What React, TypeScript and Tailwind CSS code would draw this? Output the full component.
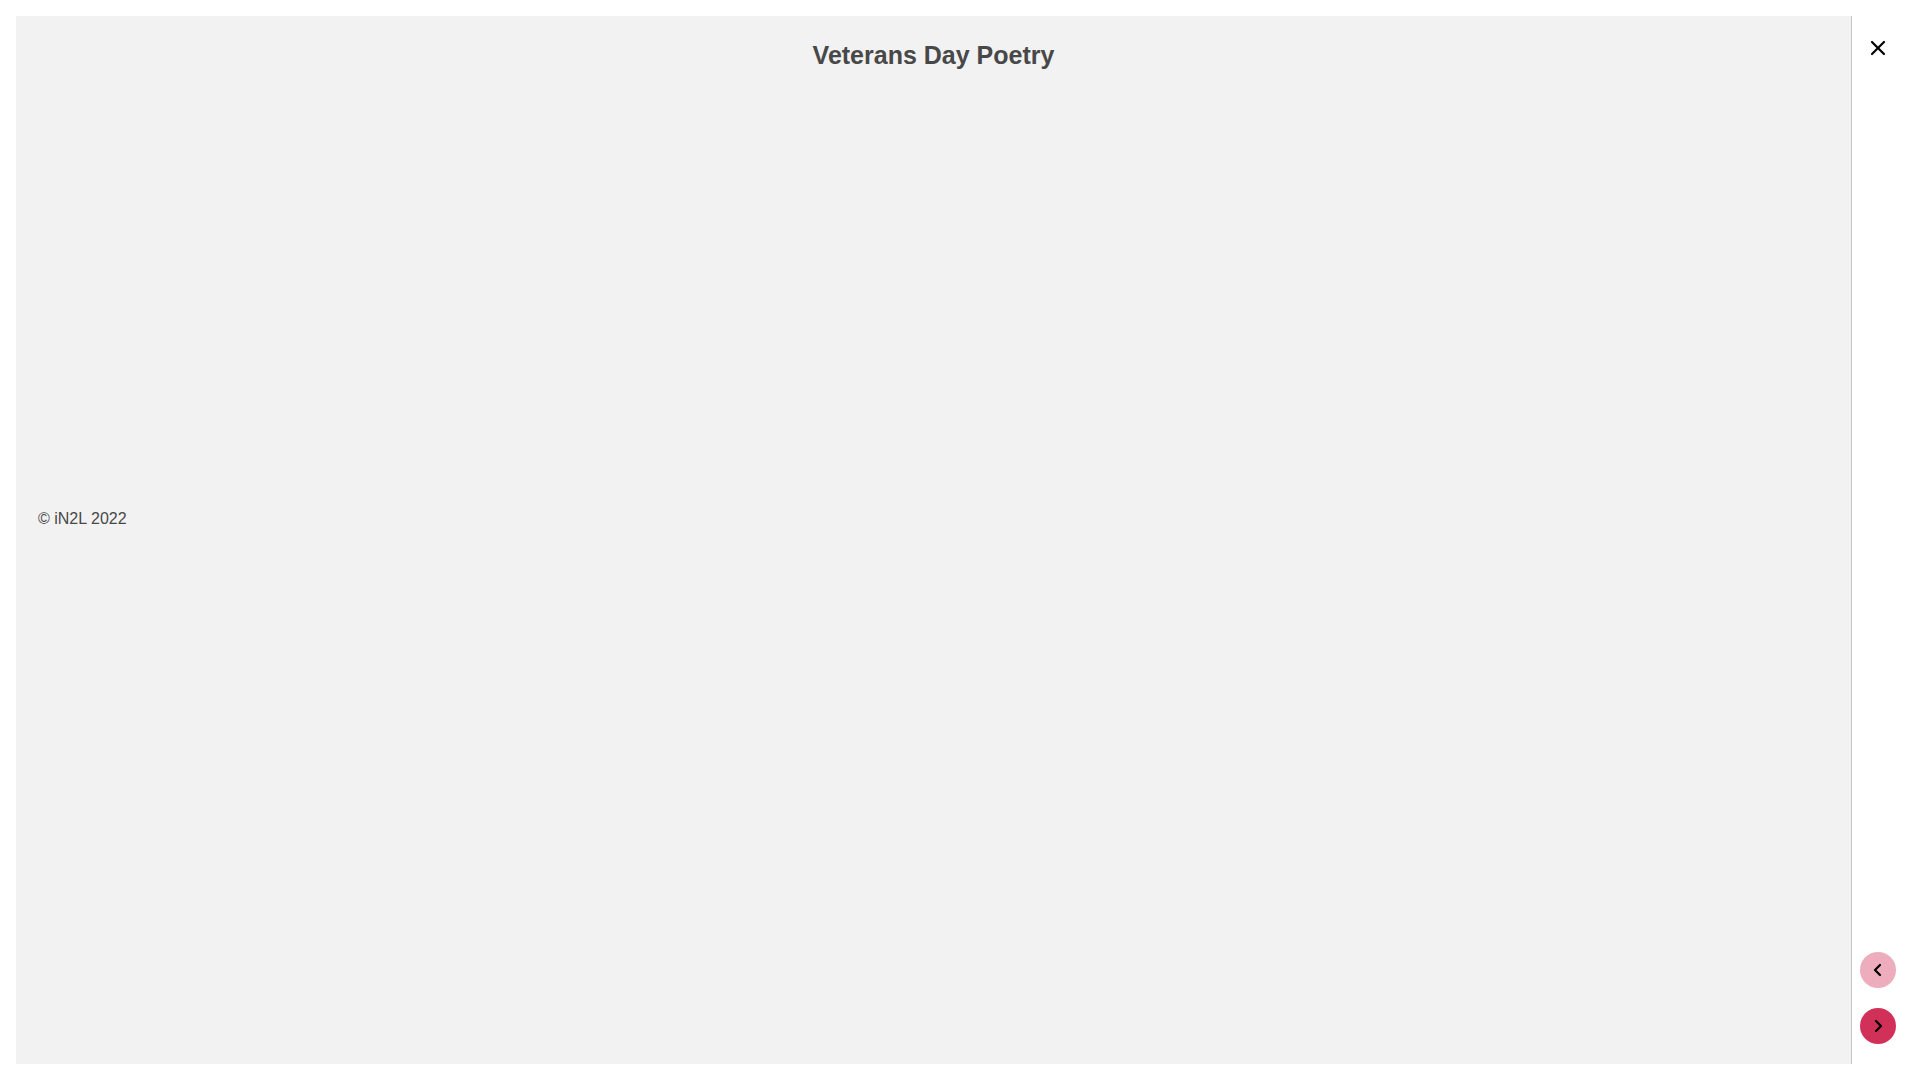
import { X } from 'lucide-react';

const pagerButton = 'flex h-9 w-9 items-center justify-center rounded-full text-black';

function Chevron({ points }: { points: string }) {
  return (
    <svg width="24" height="24" viewBox="0 0 24 24" fill="none" stroke="currentColor" strokeWidth="2.2" strokeLinecap="round" strokeLinejoin="round">
      <polyline points={points} />
    </svg>
  );
}

function Content() {
  return (
    <main className="flex-1 border-r border-[#c4c4c4] bg-[#f2f2f2] px-[22px] py-5 text-[#484848]">
      <h1 className="text-center text-[25px] leading-[38px] font-bold">Veterans Day Poetry</h1>
      <div className="h-[433px]" />
      <p className="text-base leading-6">© iN2L 2022</p>
    </main>
  );
}

function Sidebar() {
  return (
    <aside className="flex flex-col items-center justify-between px-2 py-5">
      <button type="button" aria-label="Close" className="text-black">
        <X size={24} strokeWidth={2.2} />
      </button>
      <div className="flex flex-col gap-5">
        <button type="button" aria-label="Previous page" disabled className={`${pagerButton} bg-[#d13158]/40`}>
          <Chevron points="14,7 9,12 14,17" />
        </button>
        <button type="button" aria-label="Next page" className={`${pagerButton} bg-[#d13158]`}>
          <Chevron points="10,7 15,12 10,17" />
        </button>
      </div>
    </aside>
  );
}

export default function App() {
  return (
    <div className="flex min-h-screen bg-white p-4 font-['Liberation_Sans',Arial,sans-serif]">
      <Content />
      <Sidebar />
    </div>
  );
}
